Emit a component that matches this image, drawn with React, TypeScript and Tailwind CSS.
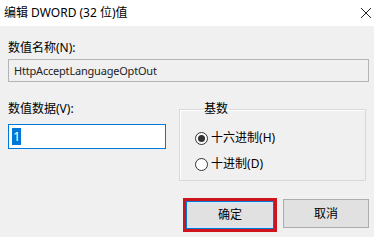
import React from "react";

const font = {
  fontFamily: '"Noto Sans", "Noto Sans CJK SC", sans-serif',
};

const Radio = ({ checked, label }: { checked?: boolean; label: string }) => (
  <div className="flex h-[16px] items-center gap-[3px]">
    <span className="flex h-[13px] w-[13px] items-center justify-center rounded-full border border-[#333] bg-white">
      {checked && <span className="h-[7px] w-[7px] rounded-full bg-[#333]" />}
    </span>
    <span className="text-[12px] leading-[16px] text-black">{label}</span>
  </div>
);

export default function App() {
  return (
    <div className="flex h-[237px] w-[374px] flex-col bg-[#f0f0f0] select-none" style={font}>
      {/* title bar */}
      <div className="flex h-[26px] items-center justify-between bg-white pl-[4px] pr-[2px]">
        <span className="text-[12px] leading-[16px] text-black">编辑 DWORD (32 位)值</span>
        <svg width="12" height="12" viewBox="0 0 12 12">
          <path d="M1 1L11 11M11 1L1 11" stroke="#222" strokeWidth="1" />
        </svg>
      </div>

      <div className="flex flex-col px-[8px] pt-[14px]">
        {/* value name */}
        <label className="text-[12px] leading-[16px] text-black">数值名称(N):</label>
        <div className="mt-[3px] flex h-[23px] w-[361px] items-center border border-[#b4b4b4] bg-[#f0f0f0] px-[5px]">
          <span className="text-[11px] leading-[14px] tracking-[-0.2px] text-[#222]">
            HttpAcceptLanguageOptOut
          </span>
        </div>

        <div className="mt-[19px] flex gap-[13px]">
          {/* value data */}
          <div className="flex w-[160px] flex-col">
            <label className="text-[12px] leading-[16px] text-black">数值数据(V):</label>
            <div className="mt-[7px] flex h-[25px] items-center border border-[#0078d7] bg-white px-[3px]">
              <span className="bg-[#0078d7] px-[1px] text-[13px] leading-[17px] text-white">1</span>
            </div>
          </div>

          {/* base */}
          <fieldset className="h-[80px] w-[189px] border border-[#d9d9d9] pl-[15px] shadow-[inset_1px_1px_0_#fff]">
            <legend className="ml-[8px] px-[1px] text-[12px] leading-[16px] text-black">基数</legend>
            <div className="mt-[13px] flex flex-col gap-[10px]">
              <Radio checked label="十六进制(H)" />
              <Radio label="十进制(D)" />
            </div>
          </fieldset>
        </div>

        {/* buttons */}
        <div className="mr-[-3px] mt-[17px] flex justify-end gap-[6px]">
          <div className="border-[3px] border-[#d0141c]">
            <button className="flex h-[28px] w-[88px] items-center justify-center border border-[#0078d7] bg-[#e1e1e1] text-[12px] text-black shadow-[inset_0_0_0_1px_#cde8ff]">
              确定
            </button>
          </div>
          <button className="mt-[1px] flex h-[29px] w-[86px] items-center justify-center border border-[#adadad] bg-[#e1e1e1] text-[12px] text-black">
            取消
          </button>
        </div>
      </div>
    </div>
  );
}
